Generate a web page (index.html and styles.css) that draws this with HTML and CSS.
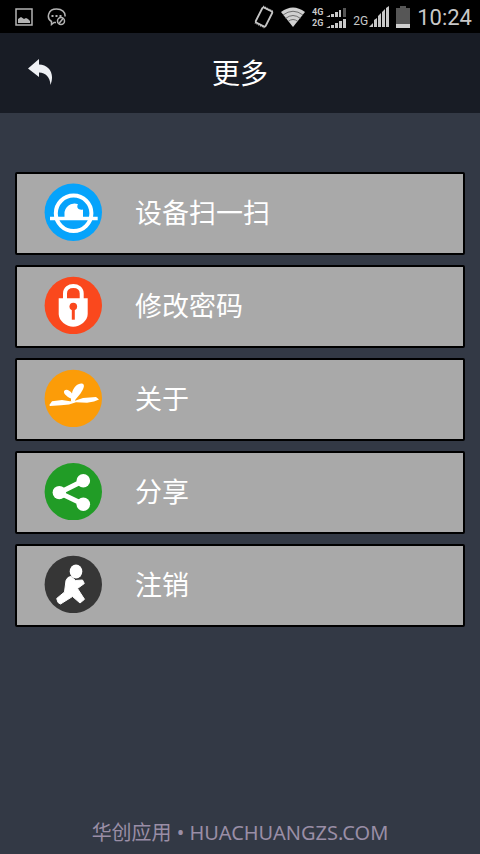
FILE: index.html
```html
<!DOCTYPE html>
<html lang="zh-CN">
<head>
<meta charset="utf-8">
<meta name="viewport" content="width=device-width, initial-scale=1">
<title>更多</title>
<link rel="stylesheet" href="styles.css">
</head>
<body>
<div class="status">
  <div class="status-group notices">
    <svg width="18" height="18" viewBox="0 0 18 18" fill="none" stroke="#b4b4b4"><rect x="1" y="1" width="16" height="16" stroke-width="1.5"/><path d="M3 15v-4l3-2 3 2 2-1 2 1 2 2v2z" fill="#b4b4b4" stroke="none"/></svg>
    <svg width="20" height="18" viewBox="0 0 20 18" fill="none" stroke="#b4b4b4" stroke-width="1.5"><path d="M9 14.500L7 14.500 4.500 16.500 4.500 13.500C-1 10 1 1 9.500 1 15 1 18.500 4 18 8.500"/><path d="M4.500 8h2M8.500 8h2M12.500 8h2" stroke-width="2"/><circle cx="14" cy="13" r="3.500"/><path d="M12 15.500l4-5"/></svg>
  </div>
  <div class="status-group signals">
    <svg class="vibrate" width="20" height="24" viewBox="0 0 20 24" fill="none" stroke="#c4c4c4"><rect x="4.500" y="3.500" width="11" height="17" rx="1.500" stroke-width="1.800" transform="rotate(27 10 12)"/><path d="M9 1.500l9.500 5M1 17.500l9.500 5" stroke-width="2" stroke-dasharray="1 1"/></svg>
    <svg class="wifi" width="24" height="20" viewBox="0 0 24 20" fill="none"><path d="M0 5Q12-4 24 5L12 20z" fill="#d0d0d0"/><path d="M2 8q10-7.500 20 0M4.500 11.500q7.500-6 15 0M7 14.500q5-4 10 0" stroke="#555" stroke-width=".8"/></svg>
    <div class="dual">
      <div class="sim"><span>4G</span><svg width="20" height="9" viewBox="0 0 20 9"><path d="M0 9l4-2v2zM5 6h3v3H5zM9 4h3v5H9zM13 2h2v7h-2z" fill="#c8c8c8"/><path d="M17 0h3v9h-3z" fill="#555"/></svg></div>
      <div class="sim"><span>2G</span><svg width="20" height="9" viewBox="0 0 20 9"><path d="M0 9l4-2v2zM5 6h3v3H5zM9 4h3v5H9zM13 2h3v7h-3zM17 0h3v9h-3z" fill="#c8c8c8"/></svg></div>
    </div>
    <div class="cell"><span>2G</span><svg width="20" height="21" viewBox="0 0 20 21" fill="#c8c8c8"><path d="M0 21l4-4v4zM5 14l3-2v9H5zM9 10l3-3v14H9zM13 6l3-3v18h-3zM17 2l3-2v21h-3z"/></svg></div>
    <svg class="battery" width="14" height="22" viewBox="0 0 14 22"><path d="M4 0h6v2h4v20H0V2h4z" fill="#565656"/><path d="M0 18h14v4H0z" fill="#d0d0d0"/></svg>
    <time class="clock">10:24</time>
  </div>
</div>
<header class="header">
  <button class="back" type="button" aria-label="返回">
    <svg width="26" height="28" viewBox="0 0 26 28"><path d="M1 9.500L12 0v5.500C22 6 28 14 23.500 26 23 18 19 14 12 13.500V18z" fill="#eef0f4"/></svg>
  </button>
  <h1 class="title">更多</h1>
</header>
<main class="menu">
  <button class="item" type="button">
    <svg class="icon" viewBox="0 0 58 58"><circle cx="29.300" cy="29.300" r="28.700" fill="#06a3fb"/><circle cx="29.600" cy="30.300" r="17.800" fill="none" stroke="#fff" stroke-width="4"/><path d="M20.500 34V31A9.800 9.800 0 0 1 34 21.300C32 24.500 34.500 27.500 39 26.500V34z" fill="#fff"/><path d="M6 33.700H53.700V37.300H6z" fill="#fff"/></svg>
    <span class="label">设备扫一扫</span>
  </button>
  <button class="item" type="button">
    <svg class="icon" viewBox="0 0 58 58"><circle cx="29.300" cy="29.500" r="28.700" fill="#fa481d"/><path d="M21 24V17.500C21 7.500 37.700 7.500 37.700 17.500V24" fill="none" stroke="#fff" stroke-width="4"/><path d="M14.700 22.300h29V38C43.700 45 36 50.700 29.200 50.700S14.700 45 14.700 38z" fill="#fff"/><circle cx="29.300" cy="30.500" r="3.800" fill="#fa481d"/><path d="M27.800 31h3v12.700h-3z" fill="#fa481d"/></svg>
    <span class="label">修改密码</span>
  </button>
  <button class="item" type="button">
    <svg class="icon" viewBox="0 0 58 58"><circle cx="29.300" cy="29.500" r="28.700" fill="#fc9c08"/><path d="M5.300 36L8 32.200 18 31 26 32.200 31 31.800 39 29 52 28 55 30.500 50 32.500 43 33.800 32 33.200 25 35.500 17 36.300 6 37z" fill="#fff"/><path d="M27 32V29.500C22 27.500 18.500 23.500 20.500 21.500S26.500 22 28 24.500C29 18 34 14 38 14.500 42 15.500 39 21 36.500 24.500L31.500 30.500 30.500 33z" fill="#fff"/></svg>
    <span class="label">关于</span>
  </button>
  <button class="item" type="button">
    <svg class="icon" viewBox="0 0 58 58"><circle cx="29.300" cy="29.700" r="28.700" fill="#219c26"/><path d="M39.300 18.700L15.300 30.700 39.300 42.300" fill="none" stroke="#fff" stroke-width="5"/><g fill="#fff"><circle cx="15.300" cy="30.600" r="6.700"/><circle cx="39.300" cy="18.700" r="6.800"/><circle cx="39.300" cy="42.300" r="6.800"/></g></svg>
    <span class="label">分享</span>
  </button>
  <button class="item" type="button">
    <svg class="icon" viewBox="0 0 58 58"><circle cx="29.300" cy="29.500" r="28.700" fill="#363636"/><ellipse cx="32" cy="16.500" rx="6.300" ry="7" fill="#fff"/><path d="M22 25.500Q23.500 21.500 27 21.500L31.500 25.500 38.500 25 40.300 28.500 33.500 33.500 40.500 44.300 36 48 28.500 41.500 16.500 49 14 47.500 12.700 43.500 20.500 37z" fill="#fff" stroke="#fff" stroke-linejoin="round"/></svg>
    <span class="label">注销</span>
  </button>
</main>
<footer class="footer">华创应用 • HUACHUANGZS.COM</footer>
</body>
</html>
```
FILE: styles.css
```css
* {
  box-sizing: border-box;
}

body {
  margin: 0;
  min-height: 100vh;
  display: flex;
  flex-direction: column;
  background: #333945;
  color: #fff;
  font-family: Roboto, "Noto Sans CJK SC", sans-serif;
}

button {
  font: inherit;
  color: inherit;
  cursor: pointer;
}

svg {
  display: block;
  flex: none;
}

.status {
  display: flex;
  justify-content: space-between;
  align-items: center;
  height: 33px;
  padding: 0 8px 0 15px;
  background: #000;
  color: #c8c8c8;
}

.status-group {
  display: flex;
  align-items: center;
}

.notices {
  gap: 14px;
}

.signals {
  gap: 7px;
}

.dual {
  display: flex;
  flex-direction: column;
  gap: 2px;
  padding-top: 2px;
}

.sim {
  display: flex;
  align-items: center;
  gap: 3px;
  font-size: 9px;
  font-weight: 700;
  line-height: 9px;
}

.cell {
  display: flex;
  align-items: flex-end;
  gap: 1px;
  font-size: 12px;
  line-height: 12px;
}

.clock {
  padding-top: 2px;
  font-size: 22px;
  line-height: 32px;
}

.header {
  display: grid;
  grid-template-columns: 80px 1fr 80px;
  align-items: center;
  height: 80px;
  background: #181c25;
}

.back {
  justify-self: center;
  padding: 0;
  border: 0;
  background: none;
}

.title {
  margin: 0;
  padding-top: 4px;
  font-size: 28px;
  font-weight: 400;
  line-height: 40px;
  text-align: center;
}

.menu {
  flex: 1;
  display: flex;
  flex-direction: column;
  gap: 10px;
  padding: 59px 15px 20px;
}

.item {
  display: flex;
  align-items: center;
  gap: 33px;
  padding: 9px 27px 12px;
  border: 2px solid #000;
  border-radius: 2px;
  background: #a9a9a9;
  font-size: 27px;
  line-height: 40px;
  text-align: left;
}

.icon {
  width: 58px;
  height: 58px;
}

.label {
  padding-top: 4px;
}

.footer {
  padding-bottom: 7px;
  color: #9a8ea6;
  font-family: "Noto Sans", "Noto Sans CJK SC", sans-serif;
  font-size: 20px;
  line-height: 28px;
  text-align: center;
}
```
